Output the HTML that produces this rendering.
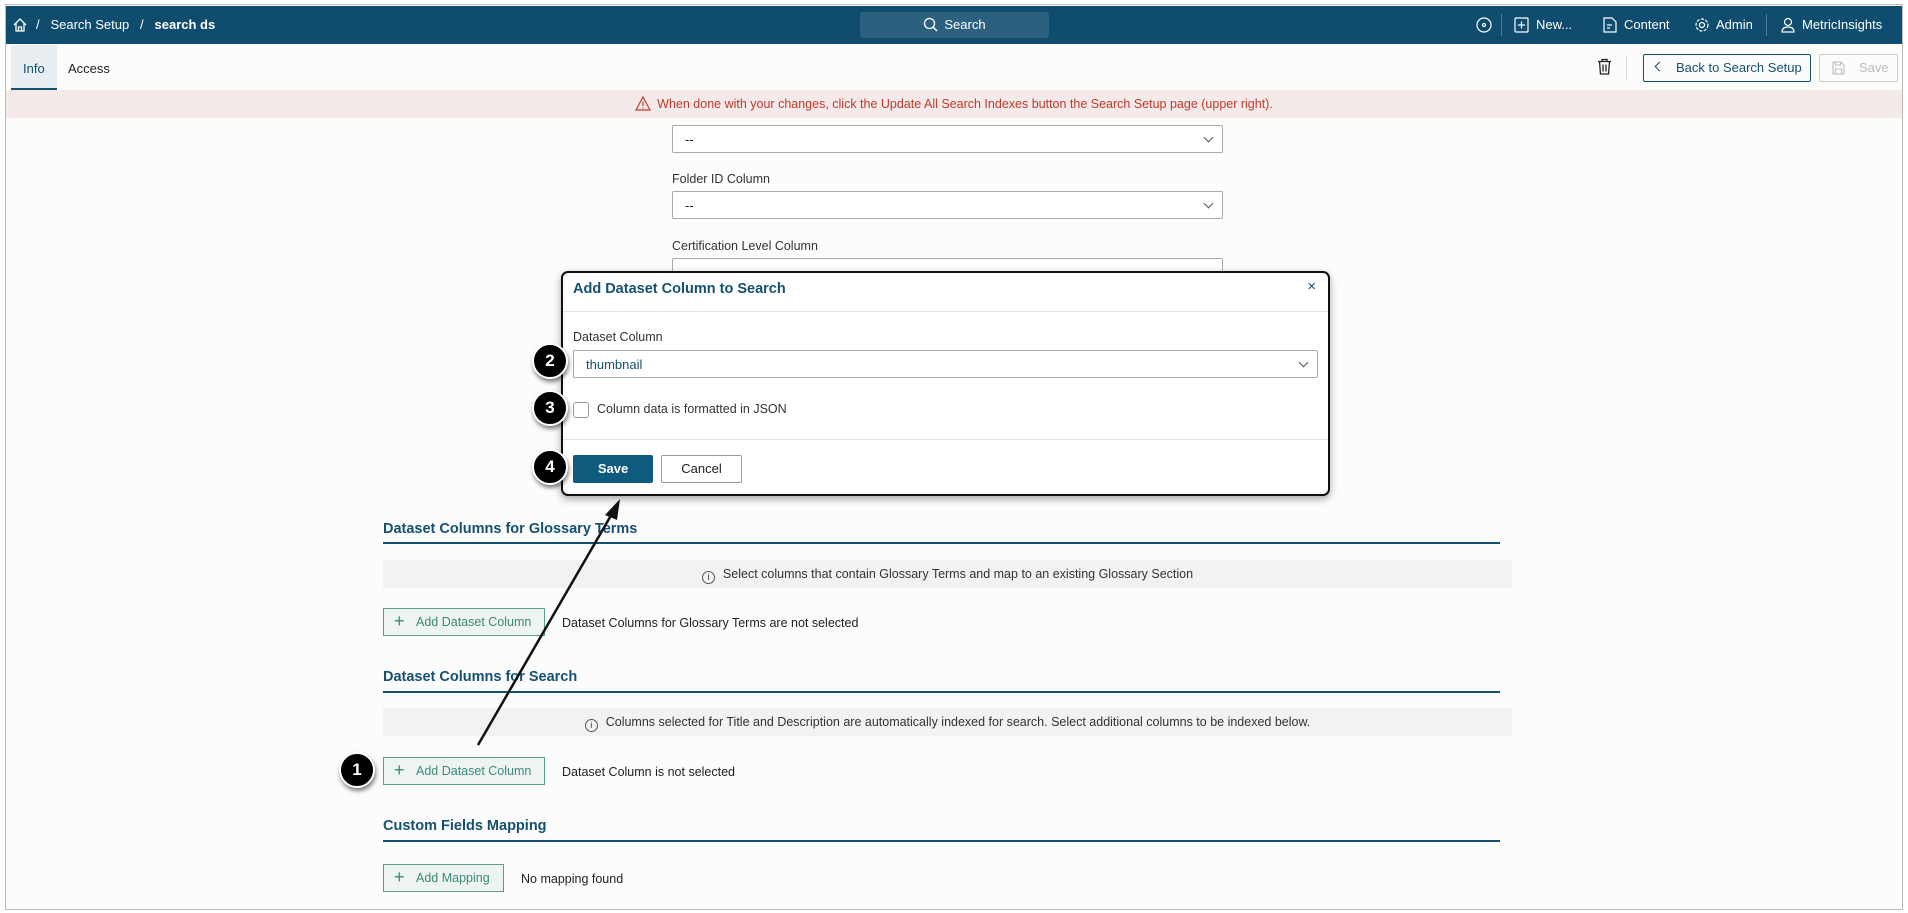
<!DOCTYPE html>
<html><head><meta charset="utf-8"><style>
*{box-sizing:border-box;margin:0;padding:0}
body{width:1908px;height:913px;overflow:hidden;background:#fff;font-family:"Liberation Sans",sans-serif;font-size:13px;color:#222;position:relative}
.abs{position:absolute}
.frame{left:5px;top:4px;width:1898px;height:906px;border:1px solid #bbb;background:#fcfcfc}
.hdr{left:6px;top:6px;width:1896px;height:38px;background:#0f4c6e;color:#fff}
.sel{position:absolute;border:1px solid #aaa;border-radius:2px;background:#fff;height:28px}
.sel span{position:absolute;left:12px;top:6px}
.chev{position:absolute;right:10px;top:8px;width:7px;height:7px;border-right:1.3px solid #555;border-bottom:1.3px solid #555;transform:rotate(45deg)}
.lbl{position:absolute;font-size:12.5px;color:#333}
.h{position:absolute;left:383px;font-size:14.5px;font-weight:bold;color:#14506f}
.ln{position:absolute;left:383px;width:1117px;height:1.5px;background:#14506f}
.info{position:absolute;left:383px;width:1129px;height:28px;background:#f2f2f2;text-align:center;line-height:28px;font-size:12.5px;color:#333}
.ic{display:inline-block;width:13px;height:13px;border:1px solid #555;border-radius:50%;font-size:9px;line-height:11px;vertical-align:-2px;margin-right:8px}
.btn{position:absolute;border:1px solid #5e9a8d;background:#eef4f2;color:#3a8a78;font-size:12.5px;height:28px;line-height:26px;padding-left:32px}
.btn:before{content:"+";position:absolute;left:10px;top:-1px;font-size:18px;font-weight:300}
.badge{position:absolute;width:36px;height:36px;border-radius:50%;background:#000;border:2.5px solid #fff;box-shadow:1px 3px 4px rgba(0,0,0,.5);color:#fff;font-weight:bold;font-size:17px;text-align:center;line-height:31px}
.nav{position:absolute;top:17px;font-size:13px}
</style></head><body>
<div class="abs frame"></div>
<div class="abs hdr">
 <svg class="abs" style="left:6px;top:11px" width="16" height="16" viewBox="0 0 16 16" fill="none" stroke="#fff" stroke-width="1.3"><path d="M2 8 8 2l6 6M4 6.5V14h8V6.5M6.5 14v-4h3v4"/></svg>
 <div class="nav" style="left:30px;top:11px">/&nbsp;&nbsp; Search Setup &nbsp;&nbsp;/&nbsp;&nbsp; <b>search ds</b></div>
 <div class="abs" style="left:854px;top:6px;width:189px;height:26px;background:#2b607f;border-radius:3px;text-align:center;line-height:26px">
  <svg style="vertical-align:-3px;margin-right:6px" width="15" height="15" viewBox="0 0 15 15" fill="none" stroke="#fff" stroke-width="1.3"><circle cx="6.5" cy="6.5" r="5"/><path d="M10 10l4 4"/></svg>Search</div>
 <svg class="abs" style="left:1470px;top:11px" width="16" height="16" viewBox="0 0 16 16" fill="none" stroke="#fff" stroke-width="1.2"><circle cx="8" cy="8" r="7"/><circle cx="8" cy="8" r="1.5"/></svg>
 <div class="abs" style="left:1495px;top:8px;width:1px;height:22px;background:#4d7a94"></div>
 <svg class="abs" style="left:1508px;top:11px" width="15" height="16" viewBox="0 0 15 16" fill="none" stroke="#fff" stroke-width="1.2"><rect x="1" y="1" width="13" height="14" rx="1"/><path d="M7.5 4.5v7M4 8h7"/></svg>
 <div class="nav" style="left:1530px;top:11px">New...</div>
 <svg class="abs" style="left:1597px;top:11px" width="14" height="16" viewBox="0 0 14 16" fill="none" stroke="#fff" stroke-width="1.2"><path d="M1 1h8l4 4v10H1z M4 8h5M4 11h3"/></svg>
 <div class="nav" style="left:1618px;top:11px">Content</div>
 <svg class="abs" style="left:1688px;top:11px" width="16" height="16" viewBox="0 0 16 16" fill="none" stroke="#fff" stroke-width="1.2"><circle cx="8" cy="8" r="2.5"/><circle cx="8" cy="8" r="6" stroke-dasharray="3 1.5"/></svg>
 <div class="nav" style="left:1710px;top:11px">Admin</div>
 <div class="abs" style="left:1760px;top:8px;width:1px;height:22px;background:#4d7a94"></div>
 <svg class="abs" style="left:1775px;top:11px" width="14" height="16" viewBox="0 0 14 16" fill="none" stroke="#fff" stroke-width="1.2"><circle cx="7" cy="5" r="3.5"/><path d="M1 15c0-4 3-5 6-5s6 1 6 5z"/></svg>
 <div class="nav" style="left:1796px;top:11px">MetricInsights</div>
</div>
<div class="abs" style="left:11px;top:45px;width:46px;height:45px;background:#e8eef2;border-bottom:2px solid #14506f"></div>
<div class="abs" style="left:23px;top:61px;color:#14506f">Info</div>
<div class="abs" style="left:68px;top:61px">Access</div>
<svg class="abs" style="left:1597px;top:58px" width="15" height="17" viewBox="0 0 15 17" fill="none" stroke="#222" stroke-width="1.3"><path d="M1 3.5h13M5 3.5V1.5h5v2M2.5 3.5l1 12.5h8l1-12.5M6 6.5v7M9 6.5v7"/></svg>
<div class="abs" style="left:1626px;top:56px;width:1px;height:24px;background:#ddd"></div>
<div class="abs" style="left:1643px;top:54px;width:168px;height:28px;border:1px solid #14506f;border-radius:2px;color:#14506f;line-height:26px;padding-left:32px">Back to Search Setup</div>
<div class="abs" style="left:1656px;top:63px;width:7px;height:7px;border-left:1.3px solid #14506f;border-bottom:1.3px solid #14506f;transform:rotate(45deg)"></div>
<div class="abs" style="left:1819px;top:54px;width:79px;height:28px;border:1px solid #ccc;border-radius:2px;color:#bbb;line-height:26px;padding-left:39px">Save</div>
<svg class="abs" style="left:1832px;top:61px" width="13" height="14" viewBox="0 0 13 14" fill="none" stroke="#bbb" stroke-width="1.1"><path d="M1 1h8l3 3v9H1z M3.5 1v3h5V1M3.5 13V8h6v5"/></svg>
<div class="abs" style="left:6px;top:90px;width:1896px;height:28px;background:#f5eaea;color:#c0392b;text-align:center;line-height:28px;font-size:12.5px">
<svg style="vertical-align:-3px;margin-right:6px" width="16" height="15" viewBox="0 0 16 15" fill="none" stroke="#c0392b" stroke-width="1.2"><path d="M8 1 15 14H1z M8 5.5v4.5M8 11.5v1"/></svg>When done with your changes, click the Update All Search Indexes button the Search Setup page (upper right).</div>
<div class="sel" style="left:672px;top:125px;width:551px"><span>--</span><i class="chev"></i></div>
<div class="lbl" style="left:672px;top:172px">Folder ID Column</div>
<div class="sel" style="left:672px;top:191px;width:551px"><span>--</span><i class="chev"></i></div>
<div class="lbl" style="left:672px;top:239px">Certification Level Column</div>
<div class="sel" style="left:672px;top:258px;width:551px"></div>

<div class="h" style="top:521px">Dataset Columns for Glossary Terms</div>
<div class="ln" style="top:542px"></div>
<div class="info" style="top:560px"><span class="ic">i</span>Select columns that contain Glossary Terms and map to an existing Glossary Section</div>
<div class="btn" style="left:383px;top:608px;width:162px">Add Dataset Column</div>
<div class="abs" style="left:562px;top:616px;font-size:12.5px">Dataset Columns for Glossary Terms are not selected</div>
<div class="h" style="top:669px">Dataset Columns for Search</div>
<div class="ln" style="top:691px"></div>
<div class="info" style="top:708px"><span class="ic">i</span>Columns selected for Title and Description are automatically indexed for search. Select additional columns to be indexed below.</div>
<div class="btn" style="left:383px;top:757px;width:162px">Add Dataset Column</div>
<div class="abs" style="left:562px;top:765px;font-size:12.5px">Dataset Column is not selected</div>
<div class="h" style="top:818px">Custom Fields Mapping</div>
<div class="ln" style="top:840px"></div>
<div class="btn" style="left:383px;top:864px;width:121px">Add Mapping</div>
<div class="abs" style="left:521px;top:872px;font-size:12.5px">No mapping found</div>

<div class="abs" style="left:561px;top:271px;width:769px;height:225px;background:#fff;border:2.5px solid #111;border-radius:7px;box-shadow:0 3px 8px rgba(0,0,0,.35)">
 <div class="abs" style="left:10px;top:8px;font-size:14.5px;font-weight:bold;color:#14506f">Add Dataset Column to Search</div>
 <div class="abs" style="right:12px;top:5px;font-size:15px;color:#14506f">×</div>
 <div class="abs" style="left:0;top:38px;width:100%;height:1px;background:#e5e5e5"></div>
 <div class="lbl" style="left:10px;top:57px">Dataset Column</div>
 <div class="sel" style="left:10px;top:77px;width:745px"><span style="color:#14506f">thumbnail</span><i class="chev"></i></div>
 <div class="abs" style="left:10px;top:129px;width:16px;height:16px;border:1px solid #999;border-radius:3px"></div>
 <div class="lbl" style="left:34px;top:129px">Column data is formatted in JSON</div>
 <div class="abs" style="left:0;top:166px;width:100%;height:1px;background:#e5e5e5"></div>
 <div class="abs" style="left:10px;top:182px;width:80px;height:28px;background:#0f5b7e;color:#fff;text-align:center;line-height:28px;font-weight:bold;border-radius:2px">Save</div>
 <div class="abs" style="left:98px;top:182px;width:81px;height:28px;border:1px solid #999;border-radius:2px;text-align:center;line-height:26px">Cancel</div>
</div>
<div class="badge" style="left:532px;top:343px">2</div>
<div class="badge" style="left:532px;top:390px">3</div>
<div class="badge" style="left:532px;top:449px">4</div>
<div class="badge" style="left:339px;top:752px">1</div>
<svg class="abs" style="left:0;top:0" width="1908" height="913"><line x1="478" y1="745" x2="613" y2="512" stroke="#111" stroke-width="2.5"/><path d="M620 499 L605 515 L617 520 Z" fill="#111"/></svg>
</body></html>
